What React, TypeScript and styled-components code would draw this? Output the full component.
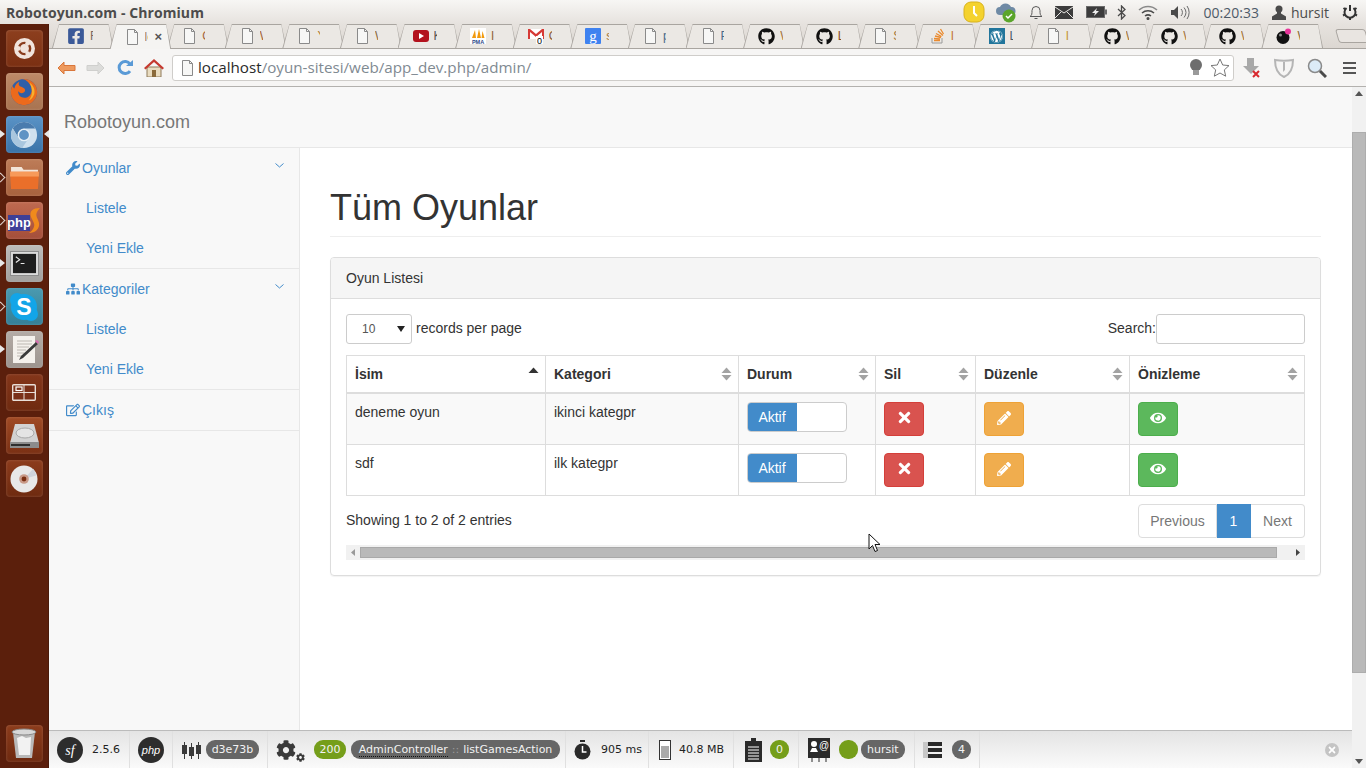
import React from "react";
import styled, { createGlobalStyle } from "styled-components";
import {
  FaCog,
  FaEye,
  FaFacebookSquare,
  FaGithub,
  FaPencilAlt,
  FaRegEdit,
  FaSitemap,
  FaTimes,
  FaWordpress,
  FaWrench,
} from "react-icons/fa";

const GlobalStyle = createGlobalStyle`
  html, body {
    margin: 0;
    height: 100%;
    overflow: hidden;
    font-family: "Liberation Sans", Arial, sans-serif;
    font-size: 14px;
    color: #333;
  }
  * { box-sizing: border-box; }
`;

const Screen = styled.div`
  position: relative;
  width: 1366px;
  height: 768px;
  display: flex;
  flex-direction: column;
  overflow: hidden;
  background: #fff;
`;

const TitleBar = styled.div`
  height: 24px;
  flex: none;
  display: flex;
  align-items: center;
  padding: 0 8px 0 6px;
  background: linear-gradient(#f7f6f4, #e6e2de);
`;

const WindowTitle = styled.div`
  font-family: "Open Sans", sans-serif;
  font-weight: 700;
  font-size: 14px;
  letter-spacing: 0.08px;
  color: #4c4c4c;
`;

const Indicators = styled.div`
  margin-left: auto;
  display: flex;
  align-items: center;
  color: #4a4a4a;
`;

const Indicator = styled.span<{ $w: number }>`
  width: ${(p) => p.$w}px;
  display: flex;
  align-items: center;
  justify-content: center;
`;

const Clock = styled.span`
  font-family: "Open Sans", sans-serif;
  font-size: 14px;
  color: #4d5a68;
  margin: 0 13px 0 10px;
`;

const UserName = styled.span`
  font-family: "Open Sans", sans-serif;
  font-size: 14px;
  color: #4d4d4d;
  margin: 0 13px 0 5px;
`;

const Desktop = styled.div`
  flex: 1;
  min-height: 0;
  display: flex;
`;

const Launcher = styled.div`
  width: 49px;
  flex: none;
  display: flex;
  flex-direction: column;
  align-items: center;
  gap: 6px;
  padding: 6px 0 6px;
  background: #5b1f0c;
  border-right: 1px solid #4a1a0a;
`;

const Tile = styled.div<{ $tone: string; $pip?: "solid" | "hollow"; $both?: boolean }>`
  position: relative;
  width: 37px;
  height: 37px;
  flex: none;
  border-radius: 4px;
  display: flex;
  align-items: center;
  justify-content: center;
  background: ${(p) => p.$tone};
  box-shadow: inset 0 0 3px rgba(255, 255, 255, 0.18);
  &::before {
    content: ${(p) => (p.$pip ? '""' : "none")};
    position: absolute;
    left: -6px;
    top: 14px;
    ${(p) =>
      p.$pip === "solid"
        ? `border-style: solid;
           border-width: 4px 0 4px 5px;
           border-color: transparent transparent transparent #e8e8e8;`
        : `left: -9px;
           top: 15px;
           width: 6px;
           height: 6px;
           border-top: 1px solid #e0d4ce;
           border-right: 1px solid #e0d4ce;
           transform: rotate(45deg);`}
  }
  &::after {
    content: ${(p) => (p.$both ? '""' : "none")};
    position: absolute;
    right: -6px;
    top: 14px;
    border-style: solid;
    border-width: 4px 5px 4px 0;
    border-color: transparent #e8e8e8 transparent transparent;
  }
`;

const TrashSlot = styled.div`
  margin-top: auto;
`;

const BrowserWindow = styled.div`
  flex: 1;
  min-width: 0;
  display: flex;
  flex-direction: column;
`;

const TabStrip = styled.div`
  height: 25px;
  flex: none;
  display: flex;
  padding-left: 3px;
  background: linear-gradient(#e6e2de, #dcd7d2);
  border-bottom: 1px solid #a9a5a0;
`;

const Tab = styled.div<{ $active?: boolean }>`
  position: relative;
  width: 57.6px;
  flex: none;
  height: ${(p) => (p.$active ? 25 : 24)}px;
  display: flex;
  align-items: center;
  gap: 5px;
  padding-left: 15px;
  z-index: ${(p) => (p.$active ? 2 : 1)};
  &::before {
    content: "";
    position: absolute;
    top: 1px;
    bottom: 0;
    left: 0;
    right: -4px;
    z-index: -1;
    background: ${(p) => (p.$active ? "#f5f4f2" : "#ebe8e4")};
    clip-path: polygon(1px 100%, 7px 0, calc(100% - 5px) 0, calc(100% - 1px) 100%);
  }
  &::after {
    content: "";
    position: absolute;
    top: 0;
    bottom: 0;
    left: 0;
    right: -4px;
    z-index: -2;
    background: #a9a5a0;
    clip-path: polygon(0 100%, 7px 0, calc(100% - 5px) 0, 100% 100%);
  }
`;

const TabLabel = styled.span<{ $color: string }>`
  width: 3px;
  overflow: hidden;
  white-space: nowrap;
  font-size: 12px;
  color: ${(p) => p.$color};
`;

const TabClose = styled.span`
  margin-left: 2px;
  color: #555;
  font-size: 13px;
  line-height: 1;
  font-weight: 700;
`;

const WpTile = styled.span`
  width: 16px;
  height: 16px;
  flex: none;
  display: flex;
  align-items: center;
  justify-content: center;
  background: #21759b;
  color: #fff;
`;

const NewTab = styled.div`
  width: 30px;
  height: 14px;
  margin: 5px 0 0 18px;
  flex: none;
  background: #e9e5e1;
  border: 1px solid #a9a5a0;
  border-radius: 3px;
  transform: skewX(16deg);
`;

const Toolbar = styled.div`
  height: 38px;
  flex: none;
  display: flex;
  align-items: center;
  padding-left: 3px;
  background: #f6f5f4;
  border-bottom: 1px solid #b3b1ae;
`;

const ToolButton = styled.div<{ $w: number }>`
  width: ${(p) => p.$w}px;
  flex: none;
  display: flex;
  justify-content: center;
  align-items: center;
`;

const AddressBox = styled.div`
  flex: 1;
  height: 26px;
  margin-left: 4px;
  display: flex;
  align-items: center;
  gap: 3px;
  padding: 0 3px 0 7px;
  background: #fff;
  border: 1px solid #cfcdca;
  border-radius: 3px;
  font-family: "Open Sans", sans-serif;
  font-size: 15.2px;
  white-space: nowrap;
`;

const UrlText = styled.span`
  margin-top: -2px;
`;

const Host = styled.span`
  color: #2a2a2a;
`;

const UrlPath = styled.span`
  color: #7f8a92;
`;

const AddressActions = styled.div`
  margin-left: auto;
  display: flex;
  align-items: center;
  gap: 7px;
`;

const Page = styled.div`
  flex: 1;
  min-height: 0;
  display: flex;
`;

const PageMain = styled.div`
  flex: 1;
  min-width: 0;
  display: flex;
  flex-direction: column;
`;

const Navbar = styled.div`
  height: 61px;
  flex: none;
  display: flex;
  align-items: center;
  padding: 11px 0 0 15px;
  background: #f8f8f8;
  border-bottom: 1px solid #e7e7e7;
`;

const Brand = styled.a`
  font-size: 18px;
  color: #777;
`;

const Columns = styled.div`
  flex: 1;
  min-height: 0;
  display: flex;
`;

const Sidebar = styled.nav`
  width: 251px;
  flex: none;
  background: #f8f8f8;
  border-right: 1px solid #e7e7e7;
`;

const NavGroup = styled.div`
  border-bottom: 1px solid #e7e7e7;
`;

const NavHead = styled.div`
  height: 40px;
  display: flex;
  align-items: center;
  padding: 0 15px 0 17px;
  gap: 2px;
  color: #428bca;
  svg:first-child {
    width: 14px;
    height: 14px;
  }
`;

const NavChevron = styled.svg`
  margin-left: auto;
  margin-top: -6px;
`;

const NavLink = styled.div`
  height: 40px;
  display: flex;
  align-items: center;
  padding-left: 37px;
  color: #428bca;
`;

const Content = styled.main`
  flex: 1;
  min-width: 0;
  padding: 40px 31px 0 30px;
`;

const PageHeader = styled.div`
  padding-bottom: 8px;
  margin-bottom: 20px;
  border-bottom: 1px solid #eee;
`;

const Heading = styled.h1`
  margin: 0;
  font-size: 36px;
  font-weight: 500;
  line-height: 1.1;
  color: #333;
`;

const Panel = styled.section`
  border: 1px solid #ddd;
  border-radius: 4px;
  box-shadow: 0 1px 1px rgba(0, 0, 0, 0.05);
`;

const PanelHeading = styled.div`
  height: 41px;
  padding: 10px 15px;
  line-height: 20px;
  background: #f5f5f5;
  border-bottom: 1px solid #ddd;
  border-radius: 3px 3px 0 0;
`;

const PanelBody = styled.div`
  padding: 15px;
`;

const TableControls = styled.div`
  height: 30px;
  margin-bottom: 11px;
  display: flex;
  align-items: center;
  justify-content: space-between;
`;

const LengthLabel = styled.div`
  display: flex;
  align-items: center;
  gap: 4px;
`;

const ControlText = styled.span`
  padding-bottom: 2px;
`;

const PageSize = styled.div`
  width: 66px;
  height: 30px;
  display: flex;
  align-items: center;
  justify-content: space-between;
  padding: 0 6px 0 15px;
  background: #fff;
  border: 1px solid #ccc;
  border-radius: 3px;
  font-size: 12px;
  color: #555;
`;

const SearchLabel = styled.label`
  display: flex;
  align-items: center;
`;

const SearchInput = styled.input`
  width: 149px;
  height: 30px;
  border: 1px solid #ccc;
  border-radius: 3px;
  background: #fff;
  outline: none;
`;

const Table = styled.table`
  width: 959px;
  table-layout: fixed;
  border-collapse: collapse;
  border: 1px solid #ddd;
`;

const HeadCell = styled.th<{ $w: number }>`
  width: ${(p) => p.$w}px;
  height: 38px;
  padding: 0 8px;
  border: 1px solid #ddd;
  border-bottom-width: 2px;
  text-align: left;
  font-weight: 700;
  line-height: 20px;
`;

const HeadInner = styled.div`
  display: flex;
  align-items: center;
  justify-content: space-between;
  margin-right: -2px;
`;

const Row = styled.tr<{ $odd?: boolean }>`
  background: ${(p) => (p.$odd ? "#f9f9f9" : "#fff")};
`;

const Cell = styled.td`
  height: 51px;
  padding: 8px;
  border: 1px solid #ddd;
  vertical-align: top;
  line-height: 20px;
`;

const Switch = styled.div`
  width: 100px;
  height: 30px;
  display: flex;
  background: #fff;
  border: 1px solid #ccc;
  border-radius: 4px;
  overflow: hidden;
`;

const SwitchOn = styled.span`
  width: 50px;
  margin: -1px 0 -1px -1px;
  display: flex;
  align-items: center;
  justify-content: center;
  background: #428bca;
  color: #fff;
`;

const ActionButton = styled.button<{ $bg: string; $edge: string }>`
  width: 40px;
  height: 34px;
  padding: 0;
  display: flex;
  align-items: center;
  justify-content: center;
  background: ${(p) => p.$bg};
  border: 1px solid ${(p) => p.$edge};
  border-radius: 4px;
  color: #fff;
  svg {
    margin-top: -3px;
  }
`;

const TableFooter = styled.div`
  height: 34px;
  margin-top: 8px;
  display: flex;
  align-items: center;
  justify-content: space-between;
`;

const InfoText = styled.div`
  margin-top: -2px;
`;

const Pagination = styled.div`
  display: flex;
  height: 34px;
`;

const PageLink = styled.a<{ $active?: boolean; $w: number; $pos?: "first" | "last" }>`
  width: ${(p) => p.$w}px;
  display: flex;
  align-items: center;
  justify-content: center;
  background: ${(p) => (p.$active ? "#428bca" : "#fff")};
  color: ${(p) => (p.$active ? "#fff" : "#777")};
  border: 1px solid ${(p) => (p.$active ? "#428bca" : "#ddd")};
  border-left-width: ${(p) => (p.$pos === "first" ? 1 : 0)}px;
  border-radius: ${(p) =>
    p.$pos === "first" ? "4px 0 0 4px" : p.$pos === "last" ? "0 4px 4px 0" : "0"};
`;

const HScroll = styled.div`
  height: 15px;
  margin-top: 7px;
  display: flex;
  align-items: center;
  padding: 0 5px;
  background: #f1f1f1;
`;

const HThumb = styled.div`
  height: 11px;
  flex: 1;
  margin: 0 19px 0 5px;
  background: #b9b9b9;
  border: 1px solid #a9a9a9;
`;

const VScroll = styled.div`
  width: 14px;
  flex: none;
  display: flex;
  flex-direction: column;
  align-items: center;
  padding-top: 4px;
  background: #f1f1f1;
`;

const VThumb = styled.div`
  width: 14px;
  height: 541px;
  margin-top: 36px;
  background: #b9b9b9;
  border: 1px solid #adadad;
`;

const VDown = styled.div`
  margin-top: auto;
  padding-bottom: 4px;
  display: flex;
`;

const DebugBar = styled.footer`
  height: 38px;
  flex: none;
  display: flex;
  align-items: stretch;
  background: linear-gradient(#e4e4e4, #fafafa);
  border-top: 1px solid #bbb;
  font-family: "DejaVu Sans", Verdana, sans-serif;
  font-size: 11px;
  color: #222;
`;

const DebugSection = styled.div<{ $w: number; $gap?: number; $pad?: number }>`
  width: ${(p) => p.$w}px;
  flex: none;
  display: flex;
  align-items: center;
  gap: ${(p) => p.$gap ?? 5}px;
  padding-left: ${(p) => p.$pad ?? 8}px;
  border-right: 1px solid #e0e0e0;
`;

const DebugPill = styled.span<{ $bg?: string; $w?: number; $ml?: number }>`
  height: 19px;
  width: ${(p) => (p.$w ? `${p.$w}px` : "auto")};
  margin-left: ${(p) => p.$ml ?? 0}px;
  display: inline-flex;
  align-items: center;
  justify-content: center;
  padding: 0 ${(p) => (p.$w ? 0 : 6)}px;
  border-radius: 9px;
  background: ${(p) => p.$bg ?? "#666"};
  color: #f2f2f2;
  white-space: nowrap;
`;

const ControllerName = styled.span`
  border-bottom: 1px dotted #111;
  line-height: 13px;
`;

const Sep = styled.span`
  color: #9a9a9a;
  margin: 0 4px;
`;

const Gears = styled.span`
  display: flex;
  align-items: flex-end;
  gap: 0;
  color: #3a3a3a;
  svg + svg {
    margin-bottom: -2px;
  }
`;

const CloseDebug = styled.div`
  margin-left: auto;
  margin-right: 13px;
  align-self: center;
  width: 14px;
  height: 14px;
  border-radius: 50%;
  background: #c4c4c4;
  display: flex;
  align-items: center;
  justify-content: center;
  color: #fff;
`;

const Pointer = styled.svg`
  position: absolute;
  left: 868px;
  top: 533px;
`;

const Doc = () => (
  <svg width="15" height="16" viewBox="0 0 15 16">
    <path d="M2.5.5h7l3 3v12h-10z" fill="#f7f7f6" stroke="#8a8a8a" />
    <path d="M9.5.5v3h3" fill="none" stroke="#8a8a8a" />
  </svg>
);

const YouTubeIcon = () => (
  <svg width="16" height="12" viewBox="0 0 16 12">
    <rect width="16" height="12" rx="3" fill="#b3121d" />
    <path d="M6 3l5 3-5 3z" fill="#fff" />
  </svg>
);

const PmaIcon = () => (
  <svg width="16" height="16" viewBox="0 0 16 16">
    <rect width="16" height="16" fill="#fff" />
    <path d="M2 10l3-8 1 8zM7 10l2-9 2 9zM11.500 10l1-7 2 7z" fill="#f29a0e" />
    <text x="8" y="15.500" textAnchor="middle" fontSize="5.500" fontWeight="700" fill="#2e4a8a" fontFamily="Liberation Sans">PMA</text>
  </svg>
);

const GmailIcon = () => (
  <svg width="16" height="16" viewBox="0 0 16 16">
    <rect y="1" width="16" height="10" fill="#fff" />
    <path d="M0 1h2l6 5 6-5h2v10h-2V4L8 9 2 4v7H0z" fill="#d63a36" />
    <rect x="8" y="8" width="7" height="8" fill="#fff" />
    <text x="11.500" y="15.500" textAnchor="middle" fontSize="9" fill="#000" fontFamily="Liberation Sans">0</text>
  </svg>
);

const GoogleIcon = () => (
  <svg width="16" height="16" viewBox="0 0 16 16">
    <rect width="16" height="16" rx="1" fill="#3f82f0" />
    <text x="8" y="13" textAnchor="middle" fontSize="15" fill="#fff" fontFamily="Liberation Serif">g</text>
  </svg>
);

const StackIcon = () => (
  <svg width="15" height="16" viewBox="0 0 15 16">
    <path d="M1 10v5h10v-5" fill="none" stroke="#9a9a9a" />
    <path d="M3 12.500h6M3 10.500l6 .5M4 8l6 1.500M5 5.500l5.500 3M7 3l5 4.500M9.500 1l3 5" stroke="#ea8a2e" strokeWidth="1.300" fill="none" />
  </svg>
);

const BombIcon = () => (
  <svg width="16" height="16" viewBox="0 0 16 16">
    <circle cx="7" cy="9.500" r="6.500" fill="#111" />
    <circle cx="4.500" cy="7" r="1.500" fill="#888" />
    <circle cx="12" cy="3.500" r="3" fill="#e8359a" />
  </svg>
);

type TabInfo = { icon: React.ReactNode; label: string; color: string };

const doc = <Doc />;
const gh = <FaGithub size={17} color="#111" />;

const tabs: TabInfo[] = [
  { icon: <FaFacebookSquare size={18} color="#3b5998" />, label: "Facebook", color: "#7a6a60" },
  { icon: doc, label: "localhost", color: "#a08060" },
  { icon: doc, label: "Oyun", color: "#a5663a" },
  { icon: doc, label: "Web", color: "#a5663a" },
  { icon: doc, label: "Yeni", color: "#b07a30" },
  { icon: doc, label: "Web", color: "#8a6a40" },
  { icon: <YouTubeIcon />, label: "Kan", color: "#555" },
  { icon: <PmaIcon />, label: "localhost", color: "#8a5a30" },
  { icon: <GmailIcon />, label: "Gelen", color: "#8a5a30" },
  { icon: <GoogleIcon />, label: "symfony", color: "#a5763a" },
  { icon: doc, label: "php", color: "#4a6a8a" },
  { icon: doc, label: "Php", color: "#4a6a8a" },
  { icon: gh, label: "Web", color: "#a5763a" },
  { icon: gh, label: "Log", color: "#8a4a20" },
  { icon: doc, label: "Sym", color: "#a5763a" },
  { icon: <StackIcon />, label: "l", color: "#c0702a" },
  { icon: <WpTile><FaWordpress size={13} /></WpTile>, label: "Log", color: "#4a5a6a" },
  { icon: doc, label: "l", color: "#c0902a" },
  { icon: gh, label: "Web", color: "#a5763a" },
  { icon: gh, label: "Web", color: "#a5763a" },
  { icon: gh, label: "Web", color: "#a5763a" },
  { icon: <BombIcon />, label: "Web", color: "#8a6a30" },
];

const Sort = ({ up }: { up?: boolean }) => (
  <svg width="11" height="14" viewBox="0 0 11 14">
    <path d="M5.500.5l5 5.500H.5z" fill={up ? "#333" : "#a3a3a3"} />
    {!up && <path d="M5.500 13.500L.5 8h10z" fill="#a3a3a3" />}
  </svg>
);

const Chevron = () => (
  <NavChevron width="9" height="5" viewBox="0 0 9 5" fill="none" stroke="#428bca">
    <path d="M.5.500l4 3.500 4-3.500" />
  </NavChevron>
);

const columns = [
  { name: "İsim", w: 199, up: true },
  { name: "Kategori", w: 193 },
  { name: "Durum", w: 137 },
  { name: "Sil", w: 100 },
  { name: "Düzenle", w: 154 },
  { name: "Önizleme", w: 175 },
];

const games = [
  { name: "deneme oyun", category: "ikinci kategpr" },
  { name: "sdf", category: "ilk kategpr" },
];

const launcherIcons = [
  {
    tone: "linear-gradient(#8d3f1e,#7a2f12)",
    art: (
      <svg width="21" height="21" viewBox="0 0 26 26">
        <circle cx="13" cy="13" r="13" fill="#f1e4dc" />
        <circle cx="13" cy="13" r="7" fill="none" stroke="#8a3c1c" strokeWidth="3" />
        <circle cx="5" cy="13" r="3" fill="#f1e4dc" />
        <circle cx="17" cy="6.500" r="3" fill="#f1e4dc" />
        <circle cx="17" cy="19.500" r="3" fill="#f1e4dc" />
      </svg>
    ),
  },
  {
    tone: "linear-gradient(#bd8a68,#a87350)",
    art: (
      <svg width="30" height="30" viewBox="0 0 32 32">
        <circle cx="16" cy="16" r="14" fill="#2f5fa8" />
        <path d="M16 2a14 14 0 1 1-14 14c0-3 1-5 2-7 0 2 1 3 2 3 0-3 3-6 5-7-1 2-1 4 1 5 3 1 6 2 5 5s-6 3-7 0c-1 5 4 8 8 7 5-1 8-7 5-13-2-4-6-7-9-7z" fill="#ec6a1c" />
        <path d="M22 6c4 3 6 7 5 12-1 3-3 6-6 7 5-6 4-13 1-19z" fill="#f8b02c" />
      </svg>
    ),
  },
  {
    tone: "linear-gradient(#5a93c6,#3a73a8)",
    pip: "solid" as const,
    both: true,
    art: (
      <svg width="28" height="28" viewBox="0 0 30 30">
        <circle cx="15" cy="15" r="14" fill="#cfe0ee" />
        <path d="M15 1a14 14 0 0 0-12 7l6 10a7 7 0 0 1 6-10h12A14 14 0 0 0 15 1z" fill="#4a7cae" />
        <path d="M3 8a14 14 0 0 0 10 21l6-9a7 7 0 0 1-10-2z" fill="#a9c6de" />
        <circle cx="15" cy="15" r="6" fill="#5f93c4" stroke="#e6eff6" strokeWidth="1.500" />
      </svg>
    ),
  },
  {
    tone: "linear-gradient(#bd7c58,#a8623e)",
    pip: "hollow" as const,
    art: (
      <svg width="29" height="25" viewBox="0 0 30 26">
        <path d="M1 2h11l2 3h15v3H1z" fill="#f3e6da" />
        <path d="M0 7h30l-1 18H1z" fill="#ea6f2a" />
        <path d="M0 7h30v5H0z" fill="#f79a5a" />
      </svg>
    ),
  },
  {
    tone: "linear-gradient(#bf6a50,#a44e3a)",
    pip: "hollow" as const,
    art: (
      <svg width="33" height="28" viewBox="0 0 33 28">
        <rect y="8" width="22" height="16" fill="#3e3f96" />
        <text x="11" y="20" textAnchor="middle" fontSize="13" fontWeight="700" fill="#fff" fontFamily="Liberation Sans Narrow, Liberation Sans">php</text>
        <path d="M32 1c-7 0-11 3-9 9 2 5 5 7 2 12-1 2-3 3-4 4 6 0 11-4 10-10-1-5-4-7-2-11 1-2 2-3 3-4z" fill="#f08a1c" />
      </svg>
    ),
  },
  {
    tone: "linear-gradient(#bdbcba,#a2a19f)",
    pip: "solid" as const,
    art: (
      <svg width="29" height="25" viewBox="0 0 30 26">
        <rect x=".5" y=".5" width="29" height="25" fill="#dcdcdc" stroke="#8a8a8a" />
        <rect x="3" y="3" width="24" height="20" fill="#1e1e1e" />
        <path d="M6 6l4 3-4 3M11 13h4" fill="none" stroke="#e8e8e8" strokeWidth="1.200" />
      </svg>
    ),
  },
  {
    tone: "linear-gradient(#4a9ab0,#357f96)",
    pip: "hollow" as const,
    art: (
      <svg width="32" height="32" viewBox="0 0 32 32">
        <circle cx="16" cy="16" r="13" fill="#12a5e8" />
        <circle cx="9" cy="9" r="7" fill="#12a5e8" />
        <circle cx="23" cy="23" r="7" fill="#12a5e8" />
        <text x="16" y="24" textAnchor="middle" fontSize="23" fontWeight="700" fill="#fff" fontFamily="Liberation Sans">S</text>
      </svg>
    ),
  },
  {
    tone: "linear-gradient(#b4aca6,#9c948e)",
    pip: "solid" as const,
    art: (
      <svg width="30" height="30" viewBox="0 0 30 30">
        <rect x="4" y="1" width="22" height="27" fill="#f4f1ec" />
        <path d="M8 6h15M8 9h15M8 12h12M8 15h9M8 18h7M8 21h6" stroke="#bdb8b2" />
        <path d="M27 7l2 2-15 14-4 2 2-4z" fill="#3a3a3a" />
        <path d="M26 6l3 3 1-2-2-2z" fill="#d86ab0" />
      </svg>
    ),
  },
  {
    tone: "linear-gradient(#84361a,#6e2a10)",
    art: (
      <svg width="24" height="17" viewBox="0 0 24 17">
        <rect x=".7" y=".7" width="22.600" height="15.600" rx="1" fill="#7a3018" stroke="#e9dfd8" strokeWidth="1.400" />
        <path d="M1 8.500h22M12 1v15" stroke="#e9dfd8" />
        <rect x="4" y="3" width="6" height="3.500" fill="none" stroke="#fff" strokeWidth="1.200" />
      </svg>
    ),
  },
  {
    tone: "linear-gradient(#a04a24,#7a3014)",
    art: (
      <svg width="29" height="26" viewBox="0 0 29 26">
        <path d="M5 1h19l5 19H0z" fill="#d2d2d2" />
        <ellipse cx="15" cy="10" rx="9" ry="5" fill="#e4e4e4" stroke="#a8a8a8" />
        <rect y="19" width="29" height="6" fill="#8c8c8c" />
        <rect x="1" y="21" width="19" height="2" fill="#2e2e2e" />
      </svg>
    ),
  },
  {
    tone: "linear-gradient(#8c3c1c,#6e2a10)",
    art: (
      <svg width="28" height="28" viewBox="0 0 29 29">
        <circle cx="14.500" cy="14.500" r="14" fill="#e8e8e8" />
        <path d="M14.500 14.500L24 4a14 14 0 0 1 3 7z" fill="#cfd4dc" />
        <circle cx="14.500" cy="14.500" r="5" fill="#c99a88" />
        <circle cx="14.500" cy="14.500" r="2.500" fill="#7a2f12" />
      </svg>
    ),
  },
];

const Wifi = () => (
  <svg width="20" height="15" viewBox="0 0 20 15" fill="none" stroke="#4a4a4a" strokeWidth="1.500">
    <path d="M1 5a13 13 0 0 1 18 0" stroke="#8a8a8a" />
    <path d="M4 8a9 9 0 0 1 12 0" />
    <path d="M7 11a5 5 0 0 1 6 0" />
    <circle cx="10" cy="13.500" r=".8" fill="#4a4a4a" />
  </svg>
);

export default function App() {
  return (
    <Screen>
      <GlobalStyle />
      <TitleBar>
        <WindowTitle>Robotoyun.com - Chromium</WindowTitle>
        <Indicators>
          <Indicator $w={30}>
            <svg width="22" height="22" viewBox="0 0 22 22">
              <rect x="1" y="1" width="20" height="20" rx="7" fill="#f4d22e" stroke="#d8b21c" />
              <path d="M11 5v7l3 3" fill="none" stroke="#fff" strokeWidth="2" />
            </svg>
          </Indicator>
          <Indicator $w={34}>
            <svg width="22" height="22" viewBox="0 0 22 22">
              <path d="M5 14a4 4 0 0 1 0-8 6 6 0 0 1 11 0 4 4 0 0 1 1 8z" fill="#6f8aa5" />
              <circle cx="14" cy="15" r="6.500" fill="#5aa52a" />
              <path d="M11 15l2 2 4-4" fill="none" stroke="#fff" strokeWidth="1.500" />
            </svg>
          </Indicator>
          <Indicator $w={26}>
            <svg width="14" height="16" viewBox="0 0 14 16" fill="none" stroke="#5a5a5a">
              <path d="M1 12.500c2-1 2-3 2-6a4 4 0 0 1 8 0c0 3 0 5 2 6z" />
              <path d="M5.500 14.500h3" />
            </svg>
          </Indicator>
          <Indicator $w={30}>
            <svg width="18" height="13" viewBox="0 0 18 13">
              <rect width="18" height="13" fill="#3c3c3c" />
              <path d="M0 1l9 6 9-6M0 12l6-6M18 12l-6-6" fill="none" stroke="#e8e6e3" />
            </svg>
          </Indicator>
          <Indicator $w={36}>
            <svg width="21" height="12" viewBox="0 0 21 12">
              <rect x=".5" y=".5" width="18" height="11" fill="#3c3c3c" stroke="#6a6a6a" />
              <rect x="19" y="3.500" width="2" height="5" fill="#6a6a6a" />
              <path d="M11 2L6 7h3l-1 3 5-5h-3z" fill="#eee" />
            </svg>
          </Indicator>
          <Indicator $w={13}>
            <svg width="9" height="15" viewBox="0 0 9 15" fill="none" stroke="#4a4a4a" strokeWidth="1.300">
              <path d="M1 4l7 6.500-3.500 3.500V1L8 4.500 1 11" />
            </svg>
          </Indicator>
          <Indicator $w={40}>
            <Wifi />
          </Indicator>
          <Indicator $w={26}>
            <svg width="20" height="15" viewBox="0 0 20 15" fill="none" stroke="#6a6a6a">
              <path d="M0 5h3l4-4v13l-4-4H0z" fill="#4a4a4a" stroke="none" />
              <path d="M10 4a5 5 0 0 1 0 7M13 2.500a8 8 0 0 1 0 10M16 1a11 11 0 0 1 0 13" />
            </svg>
          </Indicator>
          <Clock>00:20:33</Clock>
          <svg width="14" height="15" viewBox="0 0 14 15">
            <circle cx="7" cy="4" r="3.500" fill="#4a4a4a" />
            <path d="M5 7h4v1.500l5 3V15H0v-3.500l5-3z" fill="#4a4a4a" />
          </svg>
          <UserName>hursit</UserName>
          <svg width="16" height="16" viewBox="0 0 16 16" fill="none" stroke="#333" strokeWidth="2">
            <path d="M4.500 4a5.500 5.500 0 1 0 7 0" />
            <path d="M8 1v6" />
            <path d="M8 13v3M1.500 4l2 1.500M14.500 4l-2 1.500M1 11.500l2-1M15 11.500l-2-1" strokeWidth="2" />
          </svg>
        </Indicators>
      </TitleBar>

      <Desktop>
        <Launcher>
          {launcherIcons.map((item, i) => (
            <Tile key={i} $tone={item.tone} $pip={item.pip} $both={item.both}>
              {item.art}
            </Tile>
          ))}
          <TrashSlot>
            <Tile $tone="linear-gradient(#8c3c1c,#6e2a10)">
              <svg width="26" height="31" viewBox="0 0 26 31">
                <path d="M2 4h22l-3 26H5z" fill="#b9b9b9" />
                <ellipse cx="13" cy="4" rx="12" ry="3" fill="#d8d8d8" stroke="#8a8a8a" />
                <path d="M6 10l5-2 4 2 5-1-1 18H8z" fill="#f2f2f2" />
              </svg>
            </Tile>
          </TrashSlot>
        </Launcher>

        <BrowserWindow>
          <TabStrip>
            {tabs.map((tab, i) => (
              <Tab key={i} $active={i === 1}>
                {tab.icon}
                <TabLabel $color={tab.color}>{tab.label}</TabLabel>
                {i === 1 && <TabClose>×</TabClose>}
              </Tab>
            ))}
            <NewTab />
          </TabStrip>

          <Toolbar>
            <ToolButton $w={29}>
              <svg width="19" height="14" viewBox="0 0 19 14">
                <path d="M7 1L1 7l6 6V9.500h11v-5H7z" fill="#ee9a5e" stroke="#d9763a" />
              </svg>
            </ToolButton>
            <ToolButton $w={29}>
              <svg width="19" height="14" viewBox="0 0 19 14">
                <path d="M12 1l6 6-6 6V9.500H1v-5h11z" fill="#dcdcda" stroke="#cfcfcd" />
              </svg>
            </ToolButton>
            <ToolButton $w={29}>
              <svg width="16" height="17" viewBox="0 0 16 17" fill="none">
                <path d="M13 12a6 6 0 1 1 0-7" stroke="#5a9ad6" strokeWidth="3" />
                <path d="M9 7h7V1z" fill="#5a9ad6" />
              </svg>
            </ToolButton>
            <ToolButton $w={29}>
              <svg width="20" height="18" viewBox="0 0 20 18">
                <path d="M3 8h14v10H3z" fill="#e9dcc0" stroke="#8f7a5a" />
                <path d="M0 9l10-9 10 9-1.500 1.500L10 3 1.500 10.500z" fill="#c5392f" />
                <rect x="8" y="11" width="4" height="7" fill="#8a6a3a" />
              </svg>
            </ToolButton>
            <AddressBox>
              <Doc />
              <UrlText>
                <Host>localhost</Host>
                <UrlPath>/oyun-sitesi/web/app_dev.php/admin/</UrlPath>
              </UrlText>
              <AddressActions>
                <svg width="14" height="18" viewBox="0 0 14 18">
                  <circle cx="7" cy="6" r="6" fill="#6e6e6e" />
                  <rect x="4" y="11" width="6" height="5" fill="#9a9a9a" />
                </svg>
                <svg width="20" height="19" viewBox="0 0 20 19">
                  <path d="M10 1l2.700 6 6.300.6-4.700 4.300 1.400 6.300L10 15l-5.700 3.200 1.400-6.300L1 7.600 7.300 7z" fill="#fff" stroke="#777" />
                </svg>
              </AddressActions>
            </AddressBox>
            <ToolButton $w={33}>
              <svg width="20" height="20" viewBox="0 0 20 20">
                <path d="M6 0h7v8h5l-8 8-8-8h4z" fill="#a8a8a8" />
                <path d="M12 13l6 6M18 13l-6 6" stroke="#d8272d" strokeWidth="2" />
              </svg>
            </ToolButton>
            <ToolButton $w={33}>
              <svg width="20" height="20" viewBox="0 0 20 20" fill="none">
                <path d="M1 2c6 1 12 1 18 0 0 8-2 14-9 17C3 16 1 10 1 2z" stroke="#b5b5b5" strokeWidth="2" />
                <path d="M11 4h-2v10l2-2z" fill="#b5b5b5" />
              </svg>
            </ToolButton>
            <ToolButton $w={33}>
              <svg width="20" height="20" viewBox="0 0 20 20" fill="none">
                <circle cx="8" cy="8" r="6.500" fill="#dcebf7" stroke="#8a8a8a" strokeWidth="1.500" />
                <path d="M13 13l6 6" stroke="#4a4a4a" strokeWidth="3" />
              </svg>
            </ToolButton>
            <ToolButton $w={33}>
              <svg width="13" height="12" viewBox="0 0 13 12">
                <path d="M0 0h13v2H0zM0 5h13v2H0zM0 10h13v2H0z" fill="#555" />
              </svg>
            </ToolButton>
          </Toolbar>

          <Page>
            <PageMain>
              <Navbar>
                <Brand>Robotoyun.com</Brand>
              </Navbar>
              <Columns>
                <Sidebar>
                  <NavGroup>
                    <NavHead>
                      <FaWrench />
                      Oyunlar
                      <Chevron />
                    </NavHead>
                    <NavLink>Listele</NavLink>
                    <NavLink>Yeni Ekle</NavLink>
                  </NavGroup>
                  <NavGroup>
                    <NavHead>
                      <FaSitemap />
                      Kategoriler
                      <Chevron />
                    </NavHead>
                    <NavLink>Listele</NavLink>
                    <NavLink>Yeni Ekle</NavLink>
                  </NavGroup>
                  <NavGroup>
                    <NavHead>
                      <FaRegEdit />
                      Çıkış
                    </NavHead>
                  </NavGroup>
                </Sidebar>
                <Content>
                  <PageHeader>
                    <Heading>Tüm Oyunlar</Heading>
                  </PageHeader>
                  <Panel>
                    <PanelHeading>Oyun Listesi</PanelHeading>
                    <PanelBody>
                      <TableControls>
                        <LengthLabel>
                          <PageSize>
                            10
                            <svg width="8" height="6" viewBox="0 0 8 6">
                              <path d="M0 0h8L4 6z" fill="#222" />
                            </svg>
                          </PageSize>
                          <ControlText>records per page</ControlText>
                        </LengthLabel>
                        <SearchLabel>
                          <ControlText>Search:</ControlText>
                          <SearchInput />
                        </SearchLabel>
                      </TableControls>
                      <Table>
                        <thead>
                          <tr>
                            {columns.map((col) => (
                              <HeadCell key={col.name} $w={col.w}>
                                <HeadInner>
                                  {col.name}
                                  <Sort up={col.up} />
                                </HeadInner>
                              </HeadCell>
                            ))}
                          </tr>
                        </thead>
                        <tbody>
                          {games.map((game, i) => (
                            <Row key={game.name} $odd={i === 0}>
                              <Cell>{game.name}</Cell>
                              <Cell>{game.category}</Cell>
                              <Cell>
                                <Switch>
                                  <SwitchOn>Aktif</SwitchOn>
                                </Switch>
                              </Cell>
                              <Cell>
                                <ActionButton $bg="#d9534f" $edge="#d43f3a">
                                  <FaTimes size={17} />
                                </ActionButton>
                              </Cell>
                              <Cell>
                                <ActionButton $bg="#f0ad4e" $edge="#eea236">
                                  <FaPencilAlt size={14} />
                                </ActionButton>
                              </Cell>
                              <Cell>
                                <ActionButton $bg="#5cb85c" $edge="#4cae4c">
                                  <FaEye size={16} />
                                </ActionButton>
                              </Cell>
                            </Row>
                          ))}
                        </tbody>
                      </Table>
                      <TableFooter>
                        <InfoText>Showing 1 to 2 of 2 entries</InfoText>
                        <Pagination>
                          <PageLink $w={79} $pos="first">Previous</PageLink>
                          <PageLink $w={34} $active>1</PageLink>
                          <PageLink $w={54} $pos="last">Next</PageLink>
                        </Pagination>
                      </TableFooter>
                      <HScroll>
                        <svg width="4" height="7" viewBox="0 0 4 7">
                          <path d="M4 0v7L0 3.500z" fill="#999" />
                        </svg>
                        <HThumb />
                        <svg width="4" height="7" viewBox="0 0 4 7">
                          <path d="M0 0v7l4-3.500z" fill="#444" />
                        </svg>
                      </HScroll>
                    </PanelBody>
                  </Panel>
                </Content>
              </Columns>
              <DebugBar>
                <DebugSection $w={81} $gap={9}>
                  <svg width="26" height="26" viewBox="0 0 26 26">
                    <circle cx="13" cy="13" r="13" fill="#2d2d2d" />
                    <text x="13" y="18" textAnchor="middle" fontSize="14" fontStyle="italic" fill="#fff" fontFamily="Liberation Serif">sf</text>
                  </svg>
                  2.5.6
                </DebugSection>
                <DebugSection $w={43}>
                  <svg width="26" height="26" viewBox="0 0 26 26">
                    <circle cx="13" cy="13" r="13" fill="#2d2d2d" />
                    <text x="13" y="17" textAnchor="middle" fontSize="11" fontStyle="italic" fill="#fff" fontFamily="Liberation Sans">php</text>
                  </svg>
                </DebugSection>
                <DebugSection $w={95}>
                  <svg width="20" height="18" viewBox="0 0 20 18" fill="#3a3a3a">
                    <path d="M1 4h5v9H1zM3 1h1v17H3zM8 6h5v9H8zM10 2h1v16h-1zM15 4h5v9h-5zM17 1h1v17h-1z" />
                  </svg>
                  <DebugPill $w={53}>d3e73b</DebugPill>
                </DebugSection>
                <DebugSection $w={298} $gap={5}>
                  <Gears>
                    <FaCog size={20} />
                    <FaCog size={9} />
                  </Gears>
                  <DebugPill $bg="#759e1a" $w={32} $ml={4}>200</DebugPill>
                  <DebugPill $w={209}>
                    <ControllerName>AdminController</ControllerName>
                    <Sep>::</Sep>
                    listGamesAction
                  </DebugPill>
                </DebugSection>
                <DebugSection $w={83} $gap={10}>
                  <svg width="17" height="20" viewBox="0 0 17 20">
                    <rect x="6" y="0" width="5" height="2" fill="#2a2a2a" />
                    <circle cx="8.500" cy="11.500" r="8" fill="#2a2a2a" />
                    <path d="M8.500 6v6h4" fill="none" stroke="#fff" strokeWidth="1.500" />
                  </svg>
                  905 ms
                </DebugSection>
                <DebugSection $w={85} $gap={8} $pad={10}>
                  <svg width="12" height="20" viewBox="0 0 12 20">
                    <rect x=".5" y=".5" width="11" height="19" fill="#fff" stroke="#333" />
                    <rect x="2" y="6" width="8" height="12" fill="#aaa" />
                  </svg>
                  40.8 MB
                </DebugSection>
                <DebugSection $w={65} $gap={8} $pad={11}>
                  <svg width="17" height="24" viewBox="0 0 17 24">
                    <rect y="3" width="17" height="21" fill="#2a2a2a" />
                    <rect x="6" y="0" width="5" height="5" fill="#2a2a2a" />
                    <path d="M3 9h11M3 12h11M3 15h11M3 18h11M3 21h11" stroke="#fff" />
                  </svg>
                  <DebugPill $bg="#759e1a" $w={19}>0</DebugPill>
                </DebugSection>
                <DebugSection $w={116} $gap={9} $pad={9}>
                  <svg width="22" height="24" viewBox="0 0 22 24">
                    <rect width="22" height="20" fill="#2a2a2a" />
                    <circle cx="6" cy="6" r="3" fill="#fff" />
                    <path d="M2 14l2-4h4l2 4z" fill="#fff" />
                    <text x="16" y="11" textAnchor="middle" fontSize="10" fill="#fff" fontFamily="Liberation Sans">@</text>
                    <path d="M4 20v4M11 20v4M18 20v4" stroke="#2a2a2a" />
                  </svg>
                  <DebugPill $bg="#759e1a" $w={19} />
                  <DebugPill $ml={-6}>hursit</DebugPill>
                </DebugSection>
                <DebugSection $w={65} $gap={9}>
                  <svg width="20" height="18" viewBox="0 0 20 18">
                    <path d="M1 1h18v4H1zM1 7h18v4H1zM1 13h18v4H1z" fill="#2a2a2a" />
                    <path d="M0 1h5v16H0z" fill="#c8c8c8" />
                  </svg>
                  <DebugPill $w={19}>4</DebugPill>
                </DebugSection>
                <CloseDebug>
                  <FaTimes size={10} />
                </CloseDebug>
              </DebugBar>
            </PageMain>
            <VScroll>
              <svg width="8" height="5" viewBox="0 0 8 5">
                <path d="M4 0l4 5H0z" fill="#555" />
              </svg>
              <VThumb />
              <VDown>
                <svg width="8" height="5" viewBox="0 0 8 5">
                  <path d="M4 5L0 0h8z" fill="#555" />
                </svg>
              </VDown>
            </VScroll>
          </Page>
        </BrowserWindow>
      </Desktop>

      <Pointer width="12" height="20" viewBox="0 0 12 20">
        <path d="M1 1v15l3.500-3.500 2.500 6 2.500-1-2.500-6h5z" fill="#fff" stroke="#111" />
      </Pointer>
    </Screen>
  );
}
